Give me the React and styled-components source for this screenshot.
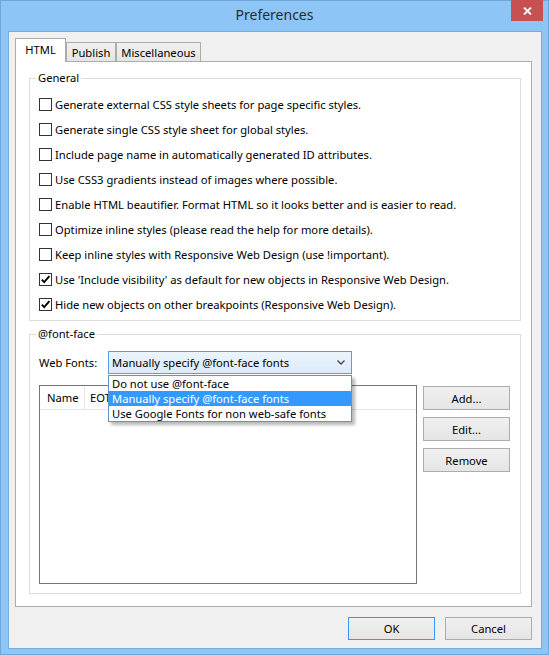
import React from 'react';
import styled, { createGlobalStyle } from 'styled-components';

const GlobalStyle = createGlobalStyle`
  html, body { margin: 0; padding: 0; background: #fff; }
  body {
    font-family: "Noto Sans", "Open Sans", sans-serif;
    font-size: 11.2px;
    color: #000;
  }
  * { box-sizing: border-box; }
`;

const Window = styled.div`
  width: 549px;
  height: 655px;
  background: #8cc5f6;
  border: 1px solid #6fa7da;
  display: flex;
  flex-direction: column;
`;

const TitleBar = styled.div`
  height: 30px;
  display: grid;
  grid-template-columns: 1fr auto 1fr;
  align-items: start;
`;

const Title = styled.div`
  grid-column: 2;
  font-size: 14px;
  line-height: 28px;
  color: #2b2b2b;
`;

const CloseButton = styled.div`
  grid-column: 3;
  justify-self: end;
  margin: -1px 5px 0 0;
  width: 32px;
  height: 21px;
  background: #c75050;
  display: flex;
  align-items: center;
  justify-content: center;
`;

const Client = styled.div`
  flex: 1;
  margin: 0 6px 5px 7px;
  background: #f0f0f0;
  border: 1px solid #76acdf;
  padding: 6px 9px 8px 6px;
  display: flex;
  flex-direction: column;
`;

const TabStrip = styled.div`
  height: 23px;
  display: flex;
  align-items: flex-end;
  position: relative;
  z-index: 1;
`;

const Tab = styled.div`
  width: ${p => p.$w}px;
  height: ${p => (p.$active ? 24 : 19)}px;
  margin-bottom: ${p => (p.$active ? -1 : 0)}px;
  border: 1px solid #acacac;
  border-bottom: none;
  background: ${p => (p.$active ? '#fff' : 'linear-gradient(#f0f0f0, #e5e5e5)')};
  display: flex;
  align-items: center;
  justify-content: center;
  padding-bottom: ${p => (p.$active ? 2 : 0)}px;
`;

const Panel = styled.div`
  height: 546px;
  background: #fff;
  border: 1px solid #acacac;
  padding: 8px 10px 0 13px;
  display: flex;
  flex-direction: column;
`;

const Group = styled.fieldset`
  margin: ${p => p.$top || 0}px 0 0 0;
  min-width: 0;
  border: 1px solid #dcdcdc;
  padding: ${p => p.$pt}px 0 ${p => p.$pb}px 9px;
`;

const Legend = styled.legend`
  padding: 0 2px;
  margin-left: -3px;
  line-height: 16px;
`;

const CheckRow = styled.label`
  height: 25px;
  display: flex;
  align-items: center;
  white-space: nowrap;
`;

const Box = styled.span`
  width: 13px;
  height: 13px;
  border: 1px solid #333;
  background: #fff;
  margin-right: 3px;
  display: flex;
  align-items: center;
  justify-content: center;
  flex-shrink: 0;
`;

const FontRow = styled.div`
  height: 23px;
  display: flex;
  align-items: center;
`;

const FieldLabel = styled.span`
  width: 69px;
`;

const SelectWrap = styled.div`
  position: relative;
  width: 244px;
  height: 23px;
`;

const Select = styled.div`
  height: 100%;
  border: 1px solid #569de5;
  background: linear-gradient(#ecf4fc, #dcecfc);
  padding: 0 6px 0 3px;
  display: flex;
  align-items: center;
  justify-content: space-between;
`;

const DropList = styled.div`
  position: absolute;
  top: 100%;
  left: 0;
  width: 100%;
  margin-top: 1px;
  background: #fff;
  border: 1px solid #5b94cf;
  box-shadow: 3px 3px 3px rgba(0, 0, 0, 0.28);
  z-index: 5;
`;

const DropItem = styled.div`
  height: 15px;
  line-height: 15px;
  padding-left: 3px;
  white-space: nowrap;
  background: ${p => (p.$selected ? '#3399ff' : 'transparent')};
  color: ${p => (p.$selected ? '#fff' : '#000')};
`;

const ListRow = styled.div`
  margin-top: 11px;
  display: flex;
  align-items: flex-start;
`;

const ListView = styled.div`
  width: 378px;
  height: 199px;
  border: 1px solid #767676;
  background: #fff;
`;

const Header = styled.div`
  height: 24px;
  display: flex;
  border-bottom: 1px solid #e5e5e5;
`;

const HeaderCell = styled.div`
  width: ${p => (p.$w ? `${p.$w}px` : 'auto')};
  padding-left: ${p => p.$pl}px;
  border-right: ${p => (p.$w ? '1px solid #e5e5e5' : 'none')};
  display: flex;
  align-items: center;
`;

const SideButtons = styled.div`
  margin: 1px 0 0 6px;
  display: flex;
  flex-direction: column;
  gap: 7px;
`;

const Button = styled.div`
  width: 87px;
  height: ${p => p.$h || 24}px;
  border: 1px solid ${p => (p.$default ? '#3399ff' : '#acacac')};
  background: linear-gradient(#f0f0f0, #e5e5e5);
  display: flex;
  align-items: center;
  justify-content: center;
`;

const Footer = styled.div`
  margin-top: 10px;
  display: flex;
  justify-content: flex-end;
  gap: 10px;
`;

const options = [
  { text: 'Generate external CSS style sheets for page specific styles.' },
  { text: 'Generate single CSS style sheet for global styles.' },
  { text: 'Include page name in automatically generated ID attributes.' },
  { text: 'Use CSS3 gradients instead of images where possible.' },
  { text: 'Enable HTML beautifier. Format HTML so it looks better and is easier to read.' },
  { text: 'Optimize inline styles (please read the help for more details).' },
  { text: 'Keep inline styles with Responsive Web Design (use !important).' },
  { text: "Use 'Include visibility' as default for new objects in Responsive Web Design.", checked: true },
  { text: 'Hide new objects on other breakpoints (Responsive Web Design).', checked: true },
];

const fontChoices = [
  'Do not use @font-face',
  'Manually specify @font-face fonts',
  'Use Google Fonts for non web-safe fonts',
];

const Check = () => (
  <svg width="11" height="11" viewBox="0 0 11 11">
    <path d="M1.8 5.6 L4.2 8.1 L9.4 2.2" fill="none" stroke="#000" strokeWidth="1.9" />
  </svg>
);

const App = () => {
  return (
    <>
      <GlobalStyle />
      <Window>
        <TitleBar>
          <Title>Preferences</Title>
          <CloseButton>
            <svg width="9" height="8" viewBox="0 0 9 8">
              <path d="M1 0.5 L8 7.5 M8 0.5 L1 7.5" stroke="#fff" strokeWidth="1.8" />
            </svg>
          </CloseButton>
        </TitleBar>
        <Client>
          <TabStrip>
            <Tab $active $w={51}>HTML</Tab>
            <Tab $w={50}>Publish</Tab>
            <Tab $w={85}>Miscellaneous</Tab>
          </TabStrip>
          <Panel>
            <Group $pt={6} $pb={3}>
              <Legend>General</Legend>
              {options.map(o => (
                <CheckRow key={o.text}>
                  <Box>{o.checked && <Check />}</Box>
                  {o.text}
                </CheckRow>
              ))}
            </Group>
            <Group $top={5} $pt={9} $pb={9}>
              <Legend>@font-face</Legend>
              <FontRow>
                <FieldLabel>Web Fonts:</FieldLabel>
                <SelectWrap>
                  <Select>
                    <span>Manually specify @font-face fonts</span>
                    <svg width="8" height="5" viewBox="0 0 8 5">
                      <path d="M0.5 0.5 L4 4 L7.5 0.5" fill="none" stroke="#444" strokeWidth="1.3" />
                    </svg>
                  </Select>
                  <DropList>
                    {fontChoices.map((c, i) => (
                      <DropItem key={c} $selected={i === 1}>{c}</DropItem>
                    ))}
                  </DropList>
                </SelectWrap>
              </FontRow>
              <ListRow>
                <ListView>
                  <Header>
                    <HeaderCell $w={45} $pl={7}>Name</HeaderCell>
                    <HeaderCell $pl={5}>EOT</HeaderCell>
                  </Header>
                </ListView>
                <SideButtons>
                  <Button>Add...</Button>
                  <Button>Edit...</Button>
                  <Button>Remove</Button>
                </SideButtons>
              </ListRow>
            </Group>
          </Panel>
          <Footer>
            <Button $default $h={23}>OK</Button>
            <Button $h={23}>Cancel</Button>
          </Footer>
        </Client>
      </Window>
    </>
  );
};

export default App;
